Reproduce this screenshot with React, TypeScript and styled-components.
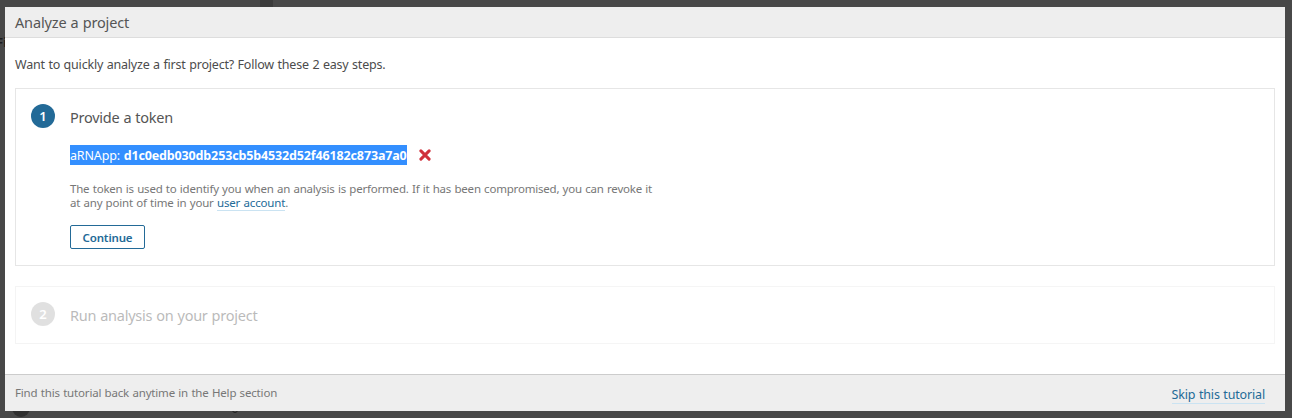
import React from "react";
import styled, { createGlobalStyle } from "styled-components";

const GlobalStyle = createGlobalStyle`
  * { box-sizing: border-box; }
  html, body { margin: 0; padding: 0; }
  body {
    background: #484848;
    color: #4c4c4c;
    font-family: "Segoe UI", "Noto Sans", "Open Sans", sans-serif;
    font-size: 12.5px;
    word-spacing: 0.5px;
    overflow: hidden;
  }
  h2, h3, p { margin: 0; font-weight: 400; }
`;

const Page = styled.div`
  position: relative;
  height: 418px;
  padding: 7px 7px 7px 5px;
  background: #484848;
  overflow: hidden;
`;

const PageDivider = styled.div`
  position: absolute;
  left: 260px;
  top: 0;
  width: 13px;
  height: 7px;
  background: #3b3b3b;
`;

const PageLabel = styled.span`
  position: absolute;
  left: -4px;
  top: 33px;
  font-size: 13px;
  line-height: 18px;
  font-weight: 700;
  color: #1c1c1c;
`;

const PageDot = styled.div`
  position: absolute;
  left: 12px;
  top: 399px;
  width: 18px;
  height: 18px;
  border-radius: 50%;
  background: #2f2f2f;
`;

const PageMark = styled.div`
  position: absolute;
  left: 232px;
  top: 407px;
  width: 6px;
  height: 6px;
  border: 1px solid #1f1f1f;
  border-radius: 50%;
`;

const Modal = styled.section`
  position: relative;
  display: flex;
  flex-direction: column;
  height: 404px;
  background: #fff;
`;

const Header = styled.header`
  height: 31px;
  padding: 0 10px;
  background: #eee;
  border-bottom: 1px solid #ddd;
`;

const Title = styled.h2`
  font-size: 14.5px;
  line-height: 31px;
  letter-spacing: -0.15px;
  color: #555;
`;

const Body = styled.div`
  flex: 1;
  padding: 17px 10px 0;
`;

const Intro = styled.p`
  line-height: 20px;
  letter-spacing: -0.2px;
  margin-bottom: 13px;
`;

const Step = styled.section<{ $height: number; $disabled?: boolean }>`
  display: flex;
  height: ${(p) => p.$height}px;
  padding: 15px;
  margin-bottom: 20px;
  border: 1px solid #e6e6e6;
  opacity: ${(p) => (p.$disabled ? 0.4 : 1)};
`;

const StepNumber = styled.div<{ $muted?: boolean }>`
  flex: none;
  width: 24px;
  height: 24px;
  margin-right: 15px;
  border-radius: 50%;
  background: ${(p) => (p.$muted ? "#b4b4b4" : "#236a97")};
  color: #fff;
  font-size: 13px;
  font-weight: 600;
  line-height: 24px;
  text-align: center;
`;

const StepContent = styled.div`
  display: flex;
  flex-direction: column;
  align-items: flex-start;
`;

const StepTitle = styled.h3`
  font-size: 14.5px;
  line-height: 24px;
  margin-top: 1px;
  letter-spacing: -0.25px;
  color: #555;
`;

const TokenRow = styled.div`
  display: flex;
  align-items: center;
  margin-top: 16px;
  height: 20px;
`;

const Token = styled.span`
  display: block;
  width: 337px;
  height: 20px;
  line-height: 21px;
  letter-spacing: -0.14px;
  white-space: nowrap;
  color: #fff;
  background: #338fff;
`;

const DeleteButton = styled.button`
  display: flex;
  margin-left: 12px;
  padding: 0;
  border: 0;
  background: none;
`;

const Description = styled.p`
  margin-top: 17px;
  font-size: 11.5px;
  line-height: 14px;
  letter-spacing: -0.2px;
  color: #777;
  white-space: nowrap;
`;

const Link = styled.a<{ $large?: boolean }>`
  color: #236a97;
  font-size: ${(p) => (p.$large ? "12.5px" : "inherit")};
  line-height: 14px;
  border-bottom: 1px solid #cae3f2;
  letter-spacing: -0.16px;
`;

const ContinueButton = styled.button`
  width: 75px;
  height: 24px;
  margin-top: 15px;
  padding: 1px 0 0;
  border: 1px solid #236a97;
  border-radius: 2px;
  background: #fff;
  color: #236a97;
  font: 600 11.5px/22px "Segoe UI", "Noto Sans", "Open Sans", sans-serif;
  letter-spacing: -0.15px;
`;

const Footer = styled.footer`
  display: flex;
  justify-content: space-between;
  height: 37px;
  padding: 0 20px 0 10px;
  background: #eee;
  border-top: 1px solid #ccc;
`;

const Hint = styled.span`
  font-size: 11.5px;
  line-height: 36px;
  letter-spacing: -0.17px;
  color: #777;
`;

const SkipSlot = styled.div`
  padding-top: 11px;
  line-height: 18px;
`;

export default function App() {
  return (
    <>
      <GlobalStyle />
      <Page>
        <PageDivider />
        <PageLabel>Fi</PageLabel>
        <PageDot />
        <PageMark />
        <Modal>
          <Header>
            <Title>Analyze a project</Title>
          </Header>
          <Body>
            <Intro>Want to quickly analyze a first project? Follow these 2 easy steps.</Intro>
            <Step $height={178}>
              <StepNumber>1</StepNumber>
              <StepContent>
                <StepTitle>Provide a token</StepTitle>
                <TokenRow>
                  <Token>
                    aRNApp: <b>d1c0edb030db253cb5b4532d52f46182c873a7a0</b>
                  </Token>
                  <DeleteButton aria-label="Revoke token">
                    <svg width="12" height="12" viewBox="0 0 12 12">
                      <path d="M1.9 1.9 10.1 10.1M10.1 1.9 1.9 10.1" stroke="#d02f3a" strokeWidth="3" strokeLinecap="round" fill="none" />
                    </svg>
                  </DeleteButton>
                </TokenRow>
                <Description>
                  The token is used to identify you when an analysis is performed. If it has been compromised, you can revoke it
                  <br />
                  at any point of time in your <Link>user account</Link>.
                </Description>
                <ContinueButton>Continue</ContinueButton>
              </StepContent>
            </Step>
            <Step $height={58} $disabled>
              <StepNumber $muted>2</StepNumber>
              <StepContent>
                <StepTitle>Run analysis on your project</StepTitle>
              </StepContent>
            </Step>
          </Body>
          <Footer>
            <Hint>Find this tutorial back anytime in the Help section</Hint>
            <SkipSlot>
              <Link $large>Skip this tutorial</Link>
            </SkipSlot>
          </Footer>
        </Modal>
      </Page>
    </>
  );
}
